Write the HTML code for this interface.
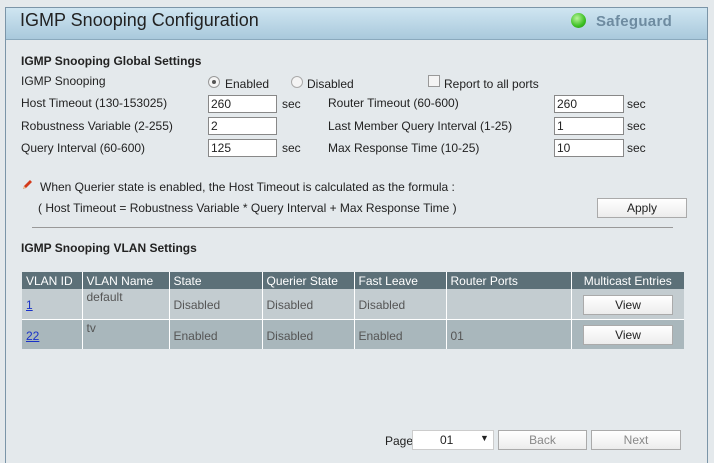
<!DOCTYPE html>
<html style="height:463px;overflow:hidden"><head><style>
*{box-sizing:border-box}
body{margin:0;width:714px;height:463px;background:#e4e9ec;font-family:"Liberation Sans",Arial,sans-serif;font-size:12px;color:#222;position:relative;overflow:hidden}
.a{position:absolute;white-space:nowrap}
.panel{position:absolute;left:5px;top:7px;width:703px;height:456px;border:1px solid #7b95a8;border-bottom:none;background:#e4e9ec}
.title{position:absolute;left:0;top:0;right:0;height:32px;background:linear-gradient(#cfe5f1,#a9c9dc);border-bottom:1px solid #8aa9bd}
.inp{position:absolute;height:18px;border:1px solid #888;background:#fff;padding:1px 2px;font-size:12px}
.btn{position:absolute;height:20px;border:1px solid #aaa;background:linear-gradient(#fff,#ececec);text-align:center;line-height:18px;font-size:12px;color:#222}
table{position:absolute;left:22px;top:272px;width:662px;border-collapse:collapse}
th{background:#5c7078;color:#fff;font-weight:normal;text-align:left;height:17px;padding:0 4px;border-left:1px solid #fff;font-size:12px}
td{height:30px;padding:0 4px;border-left:1px solid #fff;color:#555;vertical-align:middle;padding-top:3px}
tr.r1 td{background:#c3ccd0}tr.r2 td{background:#a9b7bc;border-top:1px solid #fff}
td a{color:#1a32c8}
</style></head><body>
<div class="panel"><div class="title"></div></div>
<div class="a" style="left:20px;top:10px;font-size:18px;color:#222">IGMP Snooping Configuration</div>
<div class="a" style="left:571px;top:13px;width:15px;height:15px;border-radius:50%;background:radial-gradient(circle at 40% 35%,#b8f59a,#3bbf22 60%,#2a8d18)"></div>
<div class="a" style="left:596px;top:13px;font-size:15px;font-weight:bold;color:#6e8ba0;letter-spacing:0.3px">Safeguard</div>
<div class="a" style="left:21px;top:54px;font-weight:bold">IGMP Snooping Global Settings</div>
<div class="a" style="left:21px;top:74px">IGMP Snooping</div>
<div class="a" style="left:208px;top:76px;width:12px;height:12px;border-radius:50%;border:1px solid #999;background:#f4f4f4"><div style="margin:3px;width:4px;height:4px;border-radius:50%;background:#555"></div></div>
<div class="a" style="left:225px;top:77px">Enabled</div>
<div class="a" style="left:291px;top:76px;width:12px;height:12px;border-radius:50%;border:1px solid #aaa;background:#f4f4f4"></div>
<div class="a" style="left:307px;top:77px">Disabled</div>
<div class="a" style="left:428px;top:75px;width:12px;height:12px;border:1px solid #999;background:#f4f4f4"></div>
<div class="a" style="left:444px;top:77px">Report to all ports</div>
<div class="a" style="left:21px;top:96px">Host Timeout (130-153025)</div>
<div class="inp" style="left:208px;top:95px;width:69px">260</div><div class="a" style="left:282px;top:97px">sec</div>
<div class="a" style="left:328px;top:96px">Router Timeout (60-600)</div>
<div class="inp" style="left:554px;top:95px;width:70px">260</div><div class="a" style="left:627px;top:97px">sec</div>
<div class="a" style="left:21px;top:119px">Robustness Variable (2-255)</div>
<div class="inp" style="left:208px;top:117px;width:69px">2</div>
<div class="a" style="left:328px;top:119px">Last Member Query Interval (1-25)</div>
<div class="inp" style="left:554px;top:117px;width:70px">1</div><div class="a" style="left:627px;top:119px">sec</div>
<div class="a" style="left:21px;top:141px">Query Interval (60-600)</div>
<div class="inp" style="left:208px;top:139px;width:69px">125</div><div class="a" style="left:282px;top:141px">sec</div>
<div class="a" style="left:328px;top:141px">Max Response Time (10-25)</div>
<div class="inp" style="left:554px;top:139px;width:70px">10</div><div class="a" style="left:627px;top:141px">sec</div>
<svg class="a" style="left:21px;top:179px" width="12" height="12" viewBox="0 0 12 12"><path d="M2 10 L3 7 L9 1 L11 3 L5 9 Z" fill="#d33a1a"/><path d="M2 10 L3 7 L5 9Z" fill="#e8c090"/></svg>
<div class="a" style="left:40px;top:180px">When Querier state is enabled, the Host Timeout is calculated as the formula :</div>
<div class="a" style="left:38px;top:201px">( Host Timeout = Robustness Variable * Query Interval + Max Response Time )</div>
<div class="btn" style="left:597px;top:198px;width:90px">Apply</div>
<div class="a" style="left:32px;top:227px;width:641px;height:1px;background:#999"></div>
<div class="a" style="left:21px;top:241px;font-weight:bold">IGMP Snooping VLAN Settings</div>
<table>
<tr><th style="width:60px;border-left:none">VLAN ID</th><th style="width:87px">VLAN Name</th><th style="width:93px">State</th><th style="width:92px">Querier State</th><th style="width:92px">Fast Leave</th><th style="width:125px">Router Ports</th><th style="text-align:center">Multicast Entries</th></tr>
<tr class="r1"><td style="border-left:none"><a href="#">1</a></td><td style="vertical-align:top;padding-top:1px">default</td><td>Disabled</td><td>Disabled</td><td>Disabled</td><td></td><td></td></tr>
<tr class="r2"><td style="border-left:none"><a href="#">22</a></td><td style="vertical-align:top;padding-top:1px">tv</td><td>Enabled</td><td>Disabled</td><td>Enabled</td><td>01</td><td></td></tr>
</table>
<div class="btn" style="left:583px;top:295px;width:90px">View</div>
<div class="btn" style="left:583px;top:325px;width:90px">View</div>
<div class="a" style="left:385px;top:434px">Page</div>
<div class="a" style="left:412px;top:430px;width:82px;height:20px;background:#fff;border:1px solid #ccc"><span style="position:absolute;left:27px;top:2px">01</span><span style="position:absolute;left:67px;top:2px;font-size:9px">▼</span></div>
<div class="btn" style="left:498px;top:430px;width:89px;color:#888">Back</div>
<div class="btn" style="left:591px;top:430px;width:90px;color:#888">Next</div>
</body></html>
